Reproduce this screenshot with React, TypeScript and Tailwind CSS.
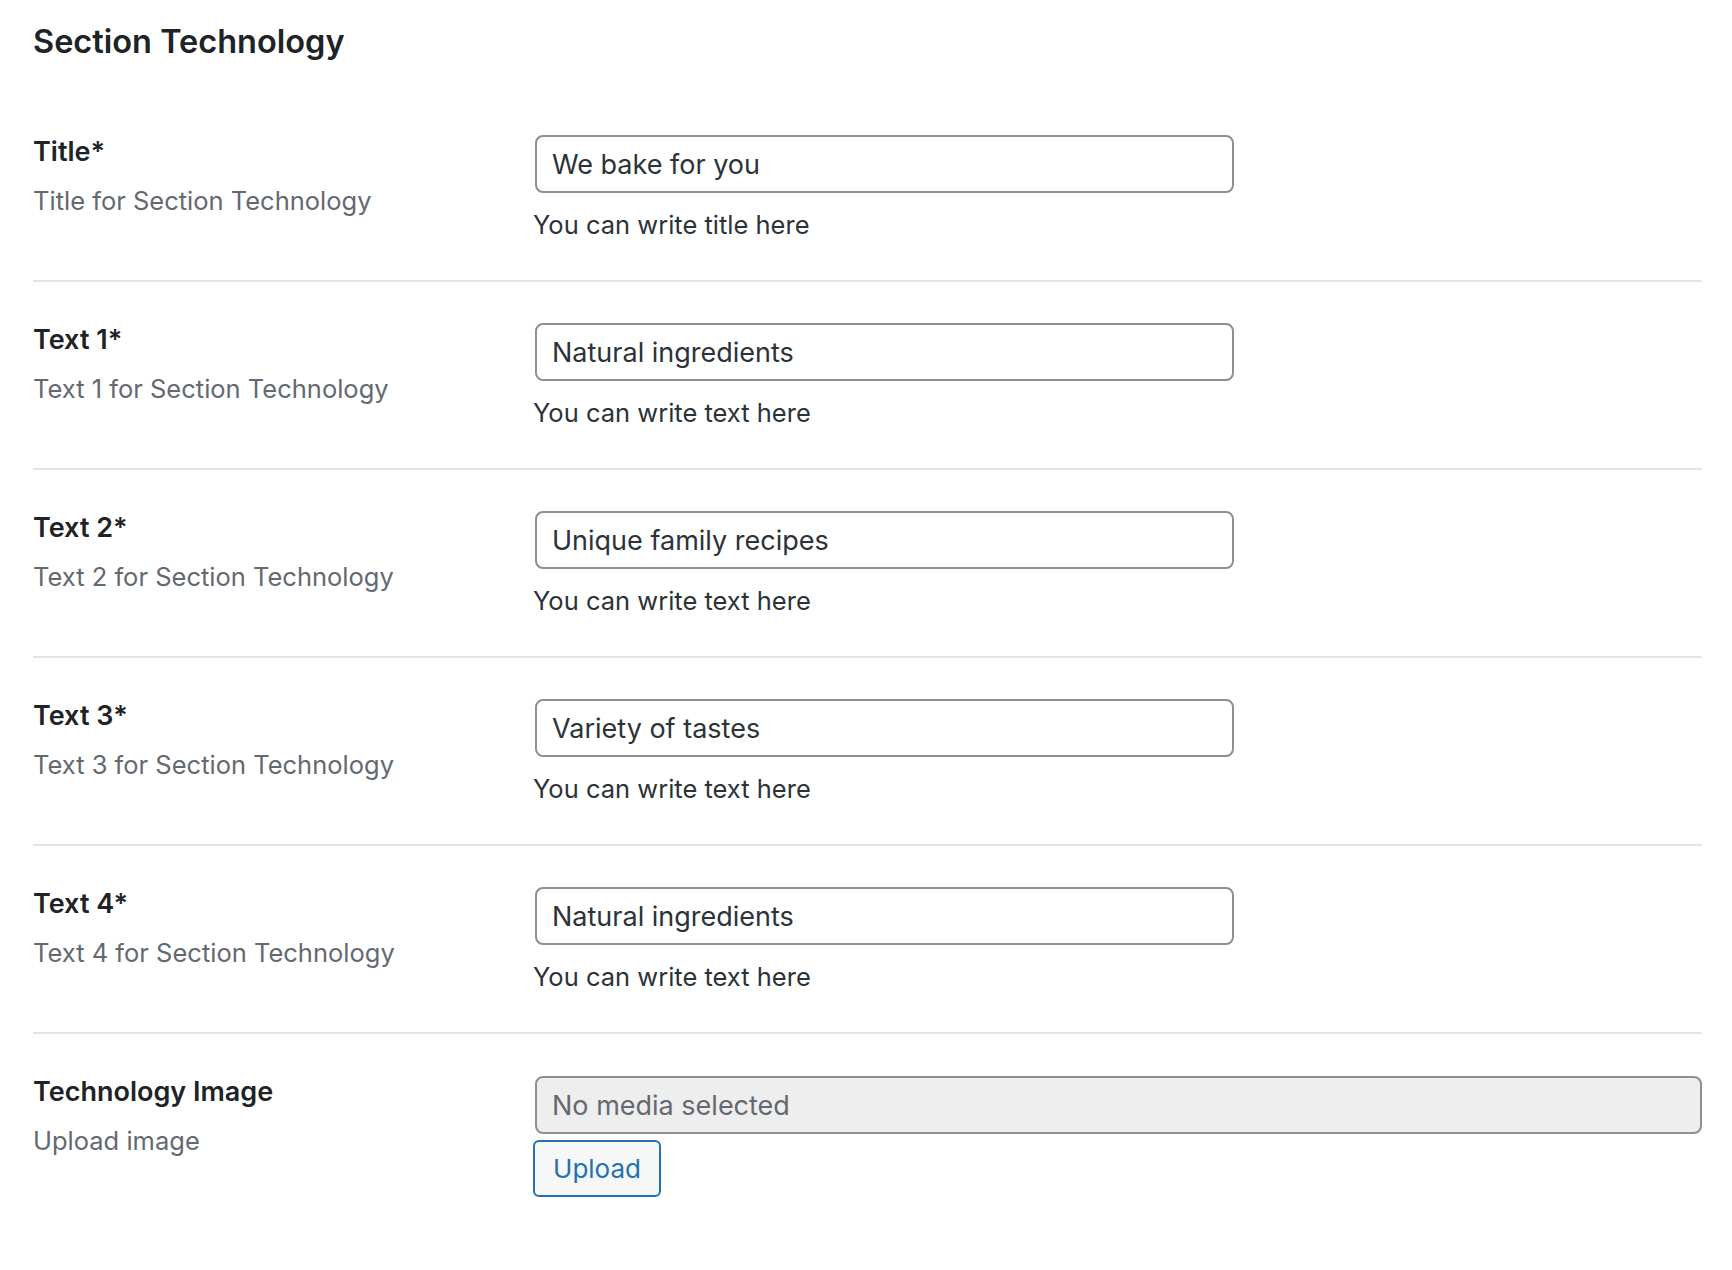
import React from 'react';

type Field = {
    label: string;
    description: string;
    value: string;
    help: string;
};

const fields: Field[] = [
    { label: 'Title*', description: 'Title for Section Technology', value: 'We bake for you', help: 'You can write title here' },
    { label: 'Text 1*', description: 'Text 1 for Section Technology', value: 'Natural ingredients', help: 'You can write text here' },
    { label: 'Text 2*', description: 'Text 2 for Section Technology', value: 'Unique family recipes', help: 'You can write text here' },
    { label: 'Text 3*', description: 'Text 3 for Section Technology', value: 'Variety of tastes', help: 'You can write text here' },
    { label: 'Text 4*', description: 'Text 4 for Section Technology', value: 'Natural ingredients', help: 'You can write text here' },
];

function Label({ label, description }: { label: string; description: string }) {
    return (
        <div className="w-[502px] shrink-0 pt-[40px]">
            <div className="text-[27px] leading-[36px] font-semibold text-[#1d2327]">{label}</div>
            <div className="mt-[13px] text-[25.5px] leading-[36px] text-[#646970]">{description}</div>
        </div>
    );
}

export default function App() {
    return (
        <div className="min-h-screen bg-white pl-[33px] pr-[30px] pt-[22px] font-['Inter',sans-serif]">
            <h2 className="text-[32.5px] leading-[40px] font-semibold text-[#1d2327]">Section Technology</h2>

            <div className="mt-[32px]">
                {fields.map((f) => (
                    <div key={f.label} className="flex border-b-2 border-[#e4e4e6]">
                        <Label label={f.label} description={f.description} />
                        <div className="pt-[41px] pb-[37px]">
                            <input
                                readOnly
                                value={f.value}
                                className="block w-[699px] h-[58px] px-[15px] rounded-[8px] border-2 border-[#8c8f94] bg-white text-[27px] text-[#2c3338] outline-none"
                            />
                            <p className="mt-[14px] text-[25.5px] leading-[36px] text-[#2c3338] -ml-[2px]">{f.help}</p>
                        </div>
                    </div>
                ))}

                {/* Image upload row */}
                <div className="flex">
                    <Label label="Technology Image" description="Upload image" />
                    <div className="flex-1 pt-[42px] pb-[40px]">
                        <input
                            readOnly
                            value="No media selected"
                            className="block w-full h-[58px] px-[15px] rounded-[8px] border-2 border-[#8c8f94] bg-[#eeeeee] text-[27px] text-[#646970] outline-none"
                        />
                        <button className="mt-[6px] -ml-[2px] h-[57px] w-[128px] rounded-[6px] border-2 border-[#2271b1] bg-[#f6f7f7] text-[26px] text-[#2271b1]">
                            Upload
                        </button>
                    </div>
                </div>
            </div>
        </div>
    );
}
